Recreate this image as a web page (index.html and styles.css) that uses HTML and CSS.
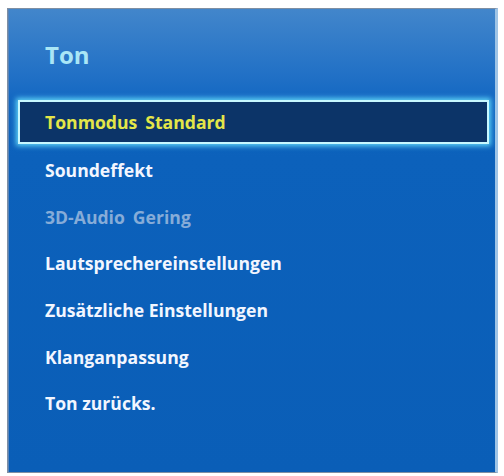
FILE: index.html
```html
<!DOCTYPE html>
<html lang="de">
<head>
    <meta charset="UTF-8">
    <title>Ton</title>
    <link rel="stylesheet" href="styles.css">
</head>
<body>
    <div class="panel">
        <h1 class="title">Ton</h1>
        <ul class="menu">
            <li class="item selected"><span>Tonmodus</span><span class="value">Standard</span></li>
            <li class="item">Soundeffekt</li>
            <li class="item disabled"><span>3D-Audio</span><span class="value">Gering</span></li>
            <li class="item">Lautsprechereinstellungen</li>
            <li class="item">Zusätzliche Einstellungen</li>
            <li class="item">Klanganpassung</li>
            <li class="item">Ton zurücks.</li>
        </ul>
    </div>
</body>
</html>
```

FILE: styles.css
```css
body {
    margin: 0;
    background: #fff;
    font-family: "Open Sans", Arial, sans-serif;
}
.panel {
    box-sizing: border-box;
    width: 491px;
    height: 465px;
    margin: 8px 0 0 7px;
    border: 1px solid #7f8fa3;
    border-right: 3px solid #9fc4e6;
    background: linear-gradient(to bottom, #4286cb 0%, #2271c6 14%, #1267c2 20%, #0c61bb 32%, #0a5eb7 100%);
    box-shadow: inset 1px 0 0 #5a84b8;
}
.title {
    margin: 0;
    height: 91px;
    padding: 31px 0 0 37px;
    box-sizing: border-box;
    font-size: 24px;
    font-weight: 700;
    line-height: 30px;
    color: #a9e6f6;
}
.menu {
    list-style: none;
    margin: 0 6px 0 10px;
    padding: 0;
}
.item {
    display: flex;
    align-items: center;
    height: 46.7px;
    padding-left: 27px;
    box-sizing: border-box;
    font-size: 17.6px;
    font-weight: 700;
    color: #f2f6ff;
}
.item .value {
    margin-left: 8px;
}
.selected {
    height: 44px;
    margin-bottom: 2.7px;
    background: #0c3468;
    border: 2px solid #c8f8ff;
    box-shadow: 0 0 5px 2px #5ed2f6;
    padding-left: 25px;
    color: #e4e648;
}
.disabled {
    color: #86acd8;
}
```
